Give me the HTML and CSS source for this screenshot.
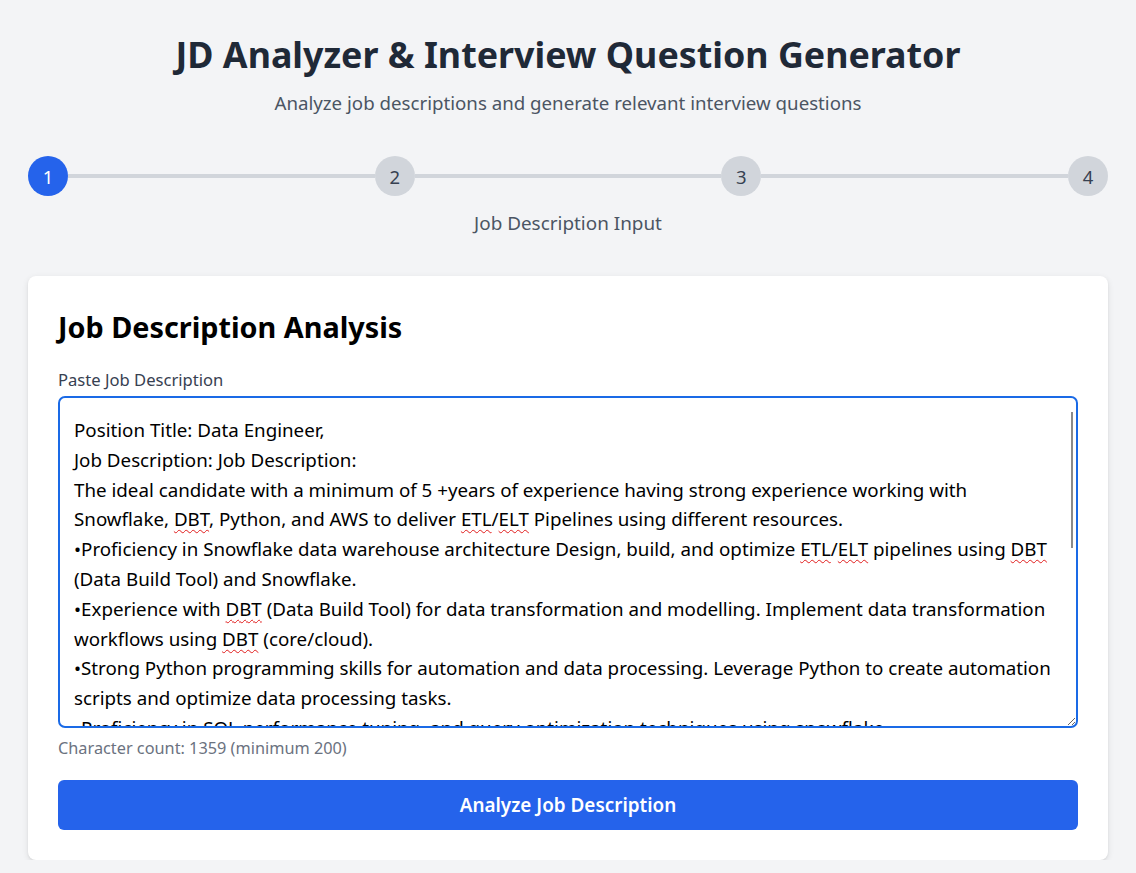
FILE: index.html
```html
<!DOCTYPE html>
<html lang="en">
<head>
<meta charset="utf-8">
<title>JD Analyzer &amp; Interview Question Generator</title>
<link rel="stylesheet" href="styles.css">
</head>
<body>
<main class="page">
  <header class="hero">
    <h1 class="hero-title">JD Analyzer &amp; Interview Question Generator</h1>
    <p class="hero-sub">Analyze job descriptions and generate relevant interview questions</p>
  </header>

  <section class="stepper">
    <div class="steps">
      <span class="step active">1</span>
      <span class="bar"></span>
      <span class="step">2</span>
      <span class="bar"></span>
      <span class="step">3</span>
      <span class="bar"></span>
      <span class="step">4</span>
    </div>
    <p class="step-label">Job Description Input</p>
  </section>

  <section class="card">
    <h2 class="card-title">Job Description Analysis</h2>
    <label class="field-label">Paste Job Description</label>
    <div class="jd-wrap">
    <div class="jd-input" contenteditable="true" role="textbox" aria-multiline="true">Position Title: Data Engineer,
Job Description: Job Description:
The ideal candidate with a minimum of 5 +years of experience having strong experience working with Snowflake, <span class="typo">DBT</span>, Python, and AWS to deliver <span class="typo">ETL</span>/<span class="typo">ELT</span> Pipelines using different resources.
•Proficiency in Snowflake data warehouse architecture Design, build, and optimize <span class="typo">ETL</span>/<span class="typo">ELT</span> pipelines using <span class="typo">DBT</span> (Data Build Tool) and Snowflake.
•Experience with <span class="typo">DBT</span> (Data Build Tool) for data transformation and modelling. Implement data transformation workflows using <span class="typo">DBT</span> (core/cloud).
•Strong Python programming skills for automation and data processing. Leverage Python to create automation scripts and optimize data processing tasks.
•Proficiency in SQL performance tuning, and query optimization techniques using snowflake.
•Troubleshoot and optimize data pipelines for performance, reliability, and scalability.
•Implement data quality checks and ensure data integrity across pipelines.
•Collaborate with data analysts, data scientists, and business stakeholders to understand data requirements.
•Experience with AWS services such as S3, Lambda, Glue, and Redshift for data integration.
•Document data flows, pipeline designs, and best practices.
•Strong communication and problem-solving skills.
Location: Remote</div>
    <span class="scroll-thumb" aria-hidden="true"></span>
    </div>
    <p class="char-count">Character count: 1359 (minimum 200)</p>
    <button class="primary-btn" type="button">Analyze Job Description</button>
  </section>
</main>
</body>
</html>
```

FILE: styles.css
```css
* { box-sizing: border-box; }

html, body {
  margin: 0;
  padding: 0;
}

body {
  background: #f3f4f6;
  font-family: "Noto Sans", "Open Sans", sans-serif;
  color: #111827;
}

.page {
  padding: 32px 28px 0;
}

.hero {
  text-align: center;
}

.hero-title {
  margin: 0;
  font-size: 35.8px;
  line-height: 44px;
  font-weight: 700;
  color: #1f2937;
}

.hero-sub {
  margin: 13px 0 0;
  font-size: 18.7px;
  line-height: 28px;
  color: #4b5563;
}

.stepper {
  margin-top: 39px;
}

.steps {
  display: flex;
  align-items: center;
}

.step {
  flex: none;
  width: 40px;
  height: 40px;
  border-radius: 50%;
  background: #d1d5db;
  color: #374151;
  display: flex;
  align-items: center;
  justify-content: center;
  font-size: 18.5px;
}

.step.active {
  background: #2563eb;
  color: #ffffff;
}

.bar {
  flex: 1;
  height: 4px;
  background: #d1d5db;
}

.step-label {
  margin: 14px 0 0;
  text-align: center;
  font-size: 18.9px;
  line-height: 26px;
  color: #4b5563;
}

.card {
  margin-top: 40px;
  background: #ffffff;
  border-radius: 8px;
  box-shadow: 0 2px 6px rgba(0, 0, 0, 0.1), 0 1px 2px rgba(0, 0, 0, 0.06);
  padding: 32px 30px 30px;
}

.card-title {
  margin: 0;
  font-size: 28.8px;
  line-height: 38px;
  font-weight: 700;
  color: #000000;
}

.field-label {
  display: block;
  margin-top: 22px;
  font-size: 16.6px;
  line-height: 24px;
  color: #374151;
}

.jd-wrap {
  position: relative;
  margin-top: 4px;
}

.jd-input {
  display: block;
  height: 332px;
  border: 2px solid #1a6ae6;
  border-radius: 7px;
  padding: 17px 14px 15px;
  font-size: 18.75px;
  line-height: 29.8px;
  color: #000000;
  white-space: pre-wrap;
  overflow-y: scroll;
  resize: vertical;
  outline: none;
}

.jd-input::-webkit-scrollbar {
  width: 8px;
}

.jd-input::-webkit-scrollbar-track {
  background: transparent;
}

.jd-input::-webkit-scrollbar-thumb {
  background: transparent;
}

.jd-input::-webkit-scrollbar-corner {
  background: transparent;
}

.scroll-thumb {
  position: absolute;
  top: 16px;
  right: 5px;
  width: 2px;
  height: 136px;
  background: #8a8a8a;
  pointer-events: none;
}

.typo {
  text-decoration: underline wavy #e11d1d;
  text-decoration-thickness: 1px;
  text-underline-offset: 3px;
}

.char-count {
  margin: 10px 0 0;
  font-size: 16.3px;
  line-height: 20px;
  color: #6b7280;
}

.primary-btn {
  display: block;
  width: 100%;
  margin-top: 22px;
  height: 50px;
  border: 0;
  border-radius: 6px;
  background: #2563eb;
  color: #ffffff;
  font-family: inherit;
  font-size: 18.9px;
  font-weight: 600;
  cursor: pointer;
}
```
